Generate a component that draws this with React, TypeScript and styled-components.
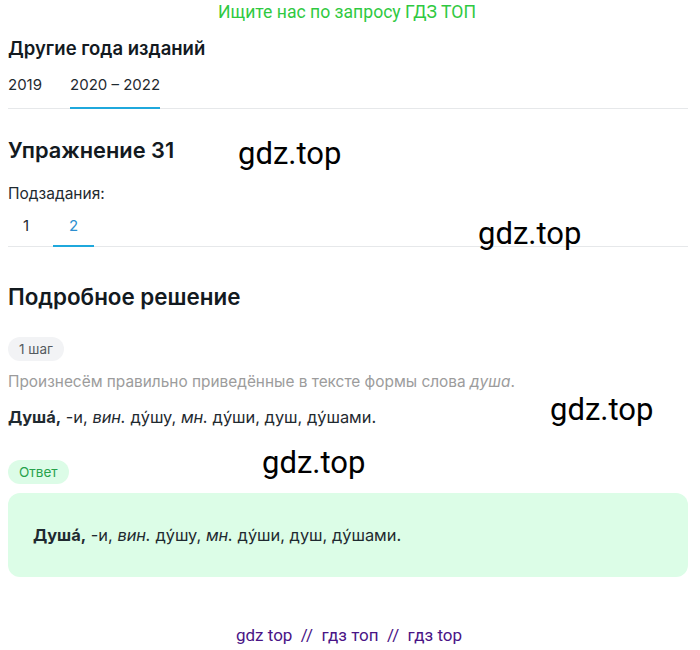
import React from "react";
import styled, { createGlobalStyle } from "styled-components";

const Global = createGlobalStyle`
  body {
    margin: 0;
    background: #ffffff;
    font-family: Inter, "Noto Sans", sans-serif;
    color: #1a1a1a;
  }
`;

const Page = styled.div`
  position: relative;
  width: 680px;
  padding: 0 12px 0 8px;
  min-height: 650px;
`;

const Promo = styled.div`
  font-family: Roboto, "Liberation Sans", sans-serif;
  font-size: 17.6px;
  line-height: 24px;
  color: #2fc941;
  text-align: center;
  margin-left: -2px;
`;

const SectionTitle = styled.h2<{ $size: number; $top: number }>`
  margin: ${(p) => p.$top}px 0 0;
  font-size: ${(p) => p.$size}px;
  line-height: 26px;
  font-weight: 600;
  color: #131a1f;
`;

const Tabs = styled.div<{ $top: number; $gap: number; $spacing: number }>`
  display: flex;
  gap: ${(p) => p.$spacing}px;
  border-bottom: 1px solid #e6e8ea;
  margin-top: ${(p) => p.$top}px;
  & > div {
    padding-bottom: ${(p) => p.$gap}px;
  }
`;

const Tab = styled.div<{ $active?: boolean; $pad: number; $blue?: boolean }>`
  font-size: 15px;
  line-height: 20px;
  padding-left: ${(p) => p.$pad}px;
  padding-right: ${(p) => p.$pad}px;
  color: ${(p) => (p.$blue && p.$active ? "#2d8fd0" : "#1f2a30")};
  border-bottom: 2px solid ${(p) => (p.$active ? "#1fa8dc" : "transparent")};
  margin-bottom: -1px;
`;

const Label = styled.div`
  margin-top: 21px;
  font-size: 15.5px;
  line-height: 20px;
  color: #1f2a30;
`;

const Pill = styled.div<{ $green?: boolean; $top: number }>`
  display: inline-flex;
  align-items: center;
  height: 24px;
  padding: 0 11px;
  margin-top: ${(p) => p.$top}px;
  border-radius: 12px;
  font-size: 13.5px;
  background: ${(p) => (p.$green ? "#dcfce7" : "#f2f3f5")};
  color: ${(p) => (p.$green ? "#27a24b" : "#555b60")};
`;

const Hint = styled.p`
  margin: 11px 0 0;
  font-size: 15.4px;
  line-height: 20px;
  color: #9c9c9c;
`;

const Line = styled.p<{ $top: number }>`
  margin: ${(p) => p.$top}px 0 0;
  font-size: 16.4px;
  line-height: 20px;
  color: #1f2a30;
  b {
    font-weight: 700;
  }
`;

const AnswerBox = styled.div`
  margin-top: 9px;
  background: #dcfde7;
  border-radius: 12px;
  height: 84px;
  display: flex;
  align-items: center;
  padding: 0 25px;
  box-sizing: border-box;
`;

const Footer = styled.div`
  margin-top: 48px;
  text-align: center;
  font-family: Roboto, "Liberation Sans", sans-serif;
  font-size: 17px;
  color: #4a1486;
  margin-left: 2px;
`;

const Mark = styled.span`
  position: absolute;
  font-family: Roboto, "Liberation Sans", sans-serif;
  font-size: 31px;
  line-height: 30px;
  color: #000;
  pointer-events: none;
`;

const marks = [
  { x: 238, y: 139 },
  { x: 478, y: 219 },
  { x: 550, y: 395 },
  { x: 262, y: 448 },
];

const Forms = () => (
  <>
    <b>Душа́,</b> -и, <i>вин.</i> ду́шу, <i>мн.</i> ду́ши, душ, ду́шами.
  </>
);

export default function App() {
  return (
    <Page>
      <Global />
      <Promo>Ищите нас по запросу ГДЗ ТОП</Promo>
      <SectionTitle $size={18.5} $top={11}>Другие года изданий</SectionTitle>
      <Tabs $top={14} $gap={12} $spacing={28}>
        <Tab $pad={0}>2019</Tab>
        <Tab $pad={0} $active>2020 – 2022</Tab>
      </Tabs>
      <SectionTitle $size={21.8} $top={28}>Упражнение 31</SectionTitle>
      <Label>Подзадания:</Label>
      <Tabs $top={12} $gap={9} $spacing={9}>
        <Tab $pad={15}>1</Tab>
        <Tab $pad={16} $active $blue>2</Tab>
      </Tabs>
      <SectionTitle $size={22.4} $top={37}>Подробное решение</SectionTitle>
      <div>
        <Pill $top={27}>1 шаг</Pill>
      </div>
      <Hint>
        Произнесём правильно приведённые в тексте формы слова <i>душа</i>.
      </Hint>
      <Line $top={15}>
        <Forms />
      </Line>
      <div>
        <Pill $green $top={33}>Ответ</Pill>
      </div>
      <AnswerBox>
        <Line $top={0}>
          <Forms />
        </Line>
      </AnswerBox>
      <Footer>gdz top&nbsp; //&nbsp; гдз топ&nbsp; //&nbsp; гдз top</Footer>
      {marks.map((m, i) => (
        <Mark key={i} style={{ left: m.x, top: m.y }}>
          gdz.top
        </Mark>
      ))}
    </Page>
  );
}
